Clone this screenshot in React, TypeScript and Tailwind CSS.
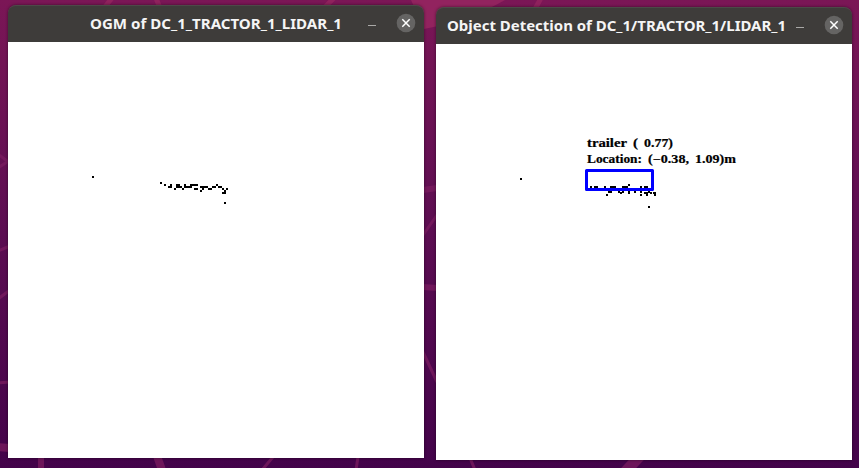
import type { ReactNode } from "react";

type Run = [x: number, y: number, width: number];

const gridPoints: Run[] = [
  [84, 134, 2], [152, 140, 2], [156, 142, 2], [162, 142, 2],
  [168, 142, 4], [176, 142, 2], [182, 142, 8], [208, 142, 2],
  [160, 144, 4], [168, 144, 6], [176, 144, 8],
  [192, 144, 4], [196, 144, 4], [204, 144, 4], [210, 144, 4],
  [166, 146, 2], [174, 146, 2], [186, 146, 4], [194, 146, 2],
  [200, 146, 4], [214, 146, 2], [218, 146, 2], [192, 148, 2],
  [216, 148, 2], [214, 150, 4], [216, 160, 2],
];

const detectionPoints: Run[] = [
  [84, 134, 2], [192, 140, 2], [154, 142, 2], [158, 142, 4],
  [168, 142, 2], [174, 142, 6], [186, 142, 6], [204, 142, 2],
  [208, 142, 4], [172, 147, 4], [182, 147, 2], [186, 147, 2],
  [192, 147, 2], [198, 147, 2], [204, 147, 2], [212, 147, 2],
  [184, 148, 2], [192, 148, 2], [208, 148, 4], [214, 148, 2],
  [217, 148, 3], [170, 150, 2], [204, 150, 2], [210, 150, 2],
  [218, 150, 2], [212, 162, 2],
];

function Points({ data }: { data: Run[] }) {
  return (
    <g shapeRendering="crispEdges">
      {data.map(([x, y, w]) => (
        <rect key={`${x}-${y}`} x={x} y={y} width={w} height="2" />
      ))}
    </g>
  );
}

function Wallpaper() {
  return (
    <svg className="absolute inset-0" width="859" height="468" aria-hidden="true">
      <path d="M411 0H505Q470 20 424 29Q418 14 411 0Z" fill="#962660" opacity=".85" />
      <g fill="none" stroke="#7b1c60" strokeWidth="5" opacity=".75">
        <path d="M104 8L112 -2M160 8L156 -2M324 8L334 -2M534 11L541 -2" stroke="#962660" />
        <path d="M-2 154L10 163M-2 168L10 160M-2 251L10 246M-2 299L10 290M-2 383L10 382" strokeWidth="3" />
        <path d="M-2 447L10 448" strokeWidth="8" />
        <path d="M423 190L437 188M423 287L437 288" strokeWidth="6" />
        <path d="M423 235L437 215M423 352L437 382" strokeWidth="3" />
        <path d="M41 456V470" strokeWidth="6" />
        <path d="M157 456L162 470" strokeWidth="8" />
        <path d="M273 457L262 470M358 457L356 470M470 458L475 470" strokeWidth="3" />
        <path d="M640 456L625 472" strokeWidth="11" />
      </g>
    </svg>
  );
}

function DesktopWindow({
  title,
  textX,
  textWidth,
  place,
  children,
}: {
  title: string;
  textX: number;
  textWidth: number;
  place: string;
  children: ReactNode;
}) {
  return (
    <section className={`absolute flex w-[416px] flex-col rounded-t-lg shadow-[0_0_3px_0px_rgba(0,0,0,0.5)] ${place}`}>
      <header className="h-[37px] rounded-t-lg border-t border-[#4c4a48] bg-[#3e3c3a]">
        <svg className="block" width="416" height="36">
          <text
            x={textX}
            y="18"
            dy="5"
            textLength={textWidth}
            lengthAdjust="spacingAndGlyphs"
            className="fill-[#f5f5f5] font-['Noto_Sans',sans-serif] text-[14.5px] font-bold"
          >
            {title}
          </text>
          <path d="M360 19.5H368" stroke="#aaa9a7" />
          <circle cx="398" cy="17" r="9.3" fill="#656463" />
          <path d="M394.3 13.3L401.7 20.7M401.7 13.3L394.3 20.7" stroke="#fff" strokeWidth="1.5" />
        </svg>
      </header>
      <main className="h-[416px] bg-white">{children}</main>
    </section>
  );
}

const labelWords = [
  { text: "trailer", x: 151, y: 103, width: 40 },
  { text: "(", x: 197, y: 103, width: 5 },
  { text: "0.77)", x: 208, y: 103, width: 29 },
  { text: "Location:", x: 151, y: 119, width: 55 },
  { text: "(−0.38,", x: 212, y: 119, width: 41 },
  { text: "1.09)m", x: 259, y: 119, width: 41 },
];

export default function App() {
  return (
    <div className="relative h-[468px] w-[859px] overflow-hidden bg-linear-to-b from-[#7b1656] via-[#5c0d52] to-[#43034a]">
      <Wallpaper />
      <DesktopWindow title="OGM of DC_1_TRACTOR_1_LIDAR_1" textX={82} textWidth={252} place="left-[8px] top-[5px]">
        <svg className="block" width="416" height="416">
          <Points data={gridPoints} />
        </svg>
      </DesktopWindow>
      <DesktopWindow title="Object Detection of DC_1/TRACTOR_1/LIDAR_1" textX={11} textWidth={339} place="left-[436px] top-[7px]">
        <svg className="block" width="416" height="416">
          <Points data={detectionPoints} />
          <rect x="150.5" y="126.5" width="66" height="19" fill="none" stroke="#0000ff" strokeWidth="3" strokeLinejoin="round" />
          <g className="font-['Liberation_Serif',serif] text-[11.5px] font-bold" stroke="#000" strokeWidth="0.2">
            {labelWords.map((word) => (
              <text
                key={word.text}
                x={word.x}
                y={word.y}
                textLength={word.width}
                lengthAdjust="spacingAndGlyphs"
              >
                {word.text}
              </text>
            ))}
          </g>
        </svg>
      </DesktopWindow>
    </div>
  );
}
